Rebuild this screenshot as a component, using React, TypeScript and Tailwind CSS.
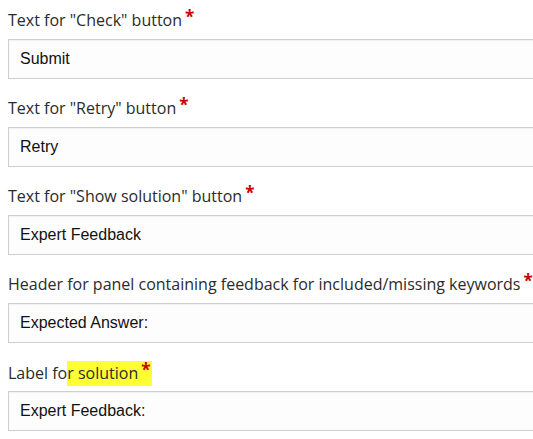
const fields = [
  { label: 'Text for "Check" button', value: 'Submit' },
  { label: 'Text for "Retry" button', value: 'Retry' },
  { label: 'Text for "Show solution" button', value: 'Expert Feedback' },
  { label: 'Header for panel containing feedback for included/missing keywords', value: 'Expected Answer:' },
];

function Star() {
  return <span className="relative -top-[3px] ml-[3px] text-[17px] font-bold leading-none text-[#cc0000]">*</span>;
}

function Field({ label, value, marked }: { label: React.ReactNode; value: string; marked?: boolean }) {
  return (
    <div className="h-[88px] pt-[9px]">
      <div className="h-[22px] whitespace-nowrap text-[16px] leading-[22px] text-[#2b2b2b] [font-family:'Open_Sans',sans-serif]">
        {label}
        {!marked && <Star />}
      </div>
      <div className="mt-[8px] flex h-[40px] w-[560px] items-center border border-[#cfcfcf] bg-[#fdfdfd] pl-[11px] text-[16px] text-[#111] shadow-[inset_0_1px_2px_rgba(0,0,0,0.06)] [font-family:'Liberation_Sans',Arial,sans-serif]">
        {value}
      </div>
    </div>
  );
}

export default function App() {
  return (
    <div className="h-[439px] w-[533px] overflow-hidden bg-white pl-[8px]">
      {fields.map((f) => (
        <Field key={f.label} label={f.label} value={f.value} />
      ))}
      <Field
        marked
        label={
          <>
            Label fo
            <span className="inline-block bg-[#ffff33] pt-[1px] pr-[2px] pb-[2px] leading-[22px]">
              r solution
              <Star />
            </span>
          </>
        }
        value="Expert Feedback:"
      />
    </div>
  );
}
